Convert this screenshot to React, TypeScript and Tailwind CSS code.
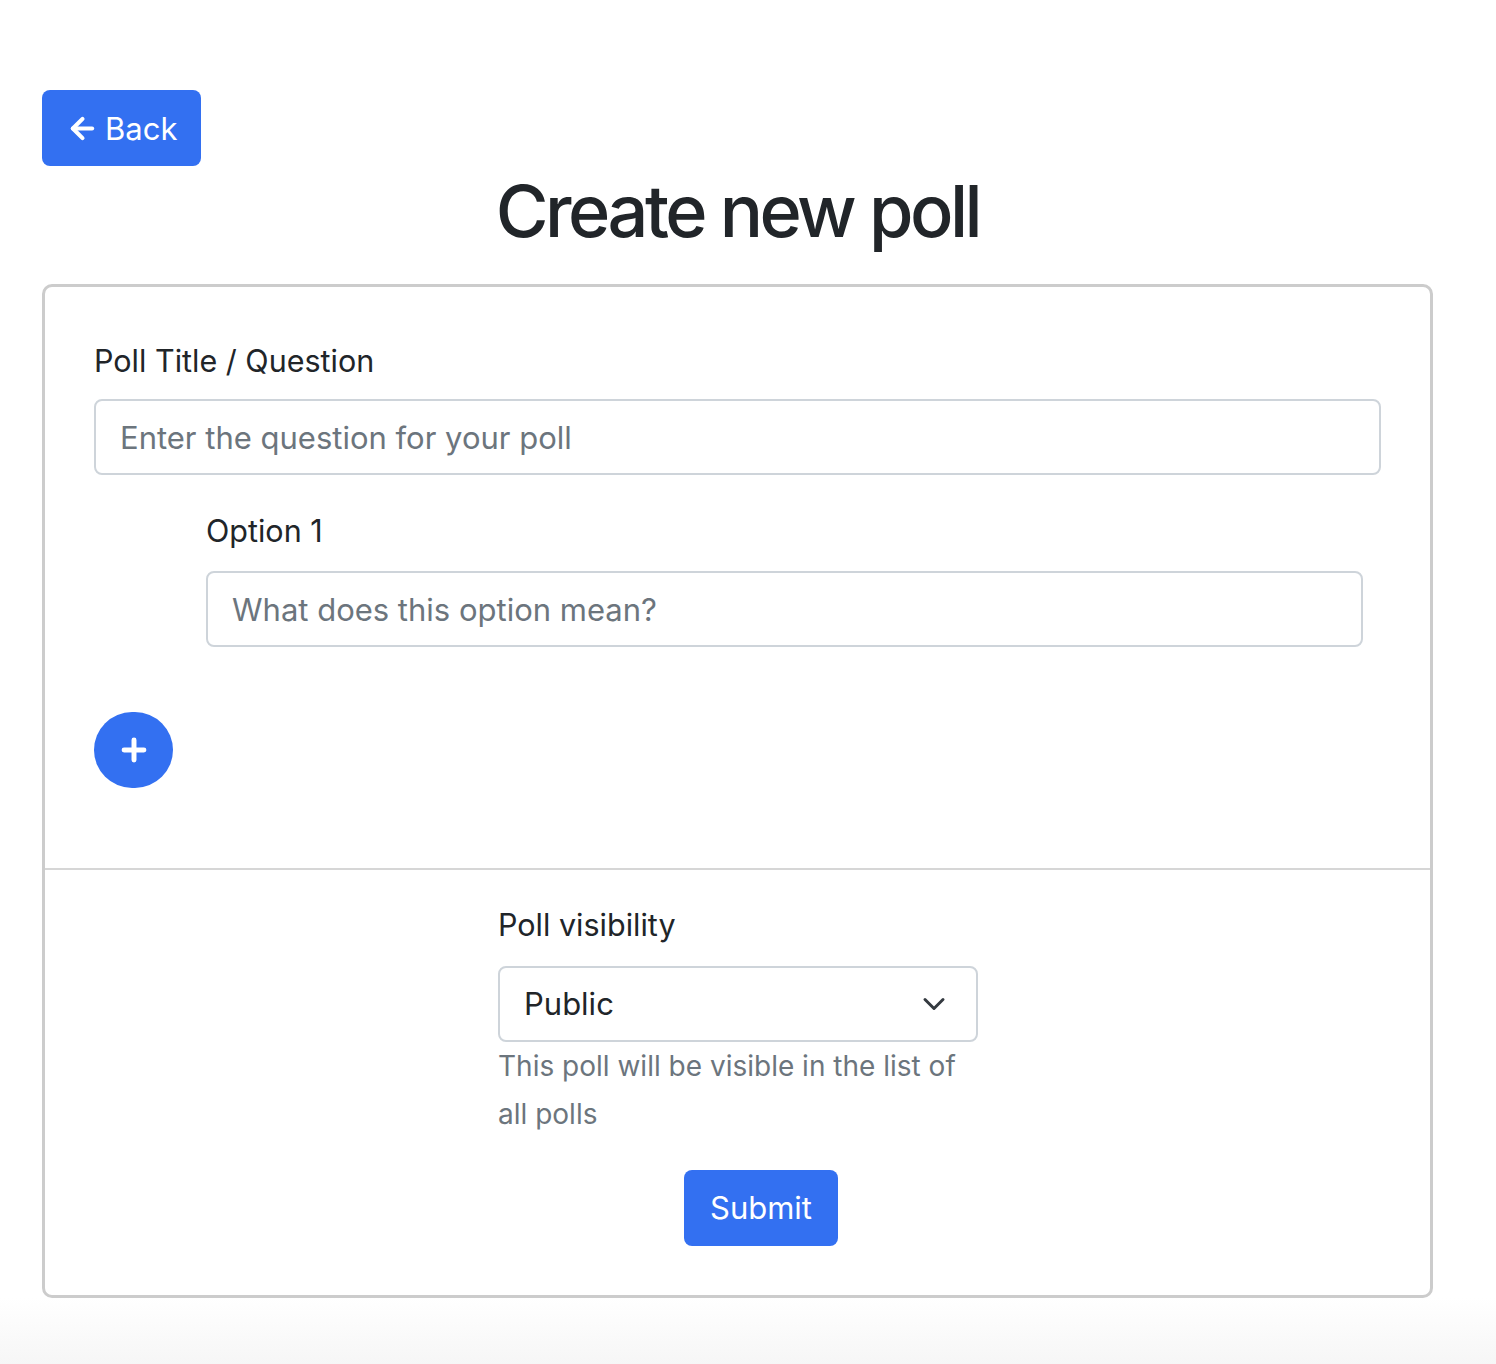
import React from 'react';
import { ArrowLeft, Plus } from 'lucide-react';

const font = { fontFamily: 'Inter, "Noto Sans", sans-serif' };

const App: React.FC = () => {
  return (
    <div className="min-h-screen bg-white text-[#212529]" style={font}>
      <div className="px-[42px] pt-[90px] w-[1475px]">
        <button className="flex items-center gap-[6px] h-[76px] pl-[24px] pr-[24px] rounded-[8px] bg-[#3370f1] text-white text-[31px] leading-none">
          <ArrowLeft className="w-[33px] h-[33px]" strokeWidth={3} />
          <span>Back</span>
        </button>

        <h1 className="text-center text-[72px] leading-[90px] font-medium tracking-[-3.5px] mb-[28px]">Create new poll</h1>

        <div className="border-[3px] border-[#cccccc] rounded-[10px]">
          <div className="px-[49px] pt-[50px] pb-[80px]">
            <label className="block text-[30.5px] leading-[48px] mb-[14px]">Poll Title / Question</label>
            <input
              className="block w-full h-[76px] border-2 border-[#ced4da] rounded-[8px] px-[24px] text-[31px] placeholder:text-[#6c757d] outline-none"
              placeholder="Enter the question for your poll"
              style={font}
            />

            <div className="ml-[112px] mr-[18px] mt-[32px]">
              <label className="block text-[30.5px] leading-[48px] mb-[16px]">Option 1</label>
              <input
                className="block w-full h-[76px] border-2 border-[#ced4da] rounded-[8px] px-[24px] text-[31px] placeholder:text-[#6c757d] outline-none"
                placeholder="What does this option mean?"
                style={font}
              />
            </div>

            <button className="mt-[65px] w-[79px] h-[76px] rounded-full bg-[#3370f1] flex items-center justify-center text-white">
              <Plus className="w-[34px] h-[34px]" strokeWidth={3.5} />
            </button>
          </div>

          <div className="border-t-2 border-[#d6d6d6]" />

          <div className="pt-[31px] pb-[49px] flex justify-center">
            <div className="w-[480px] ml-[1px]">
              <label className="block text-[30.5px] leading-[48px] mb-[17px]">Poll visibility</label>
              <div className="relative h-[76px] border-2 border-[#ced4da] rounded-[8px] flex items-center px-[24px] text-[31px]">
                <span>Public</span>
                <svg className="absolute right-[28px] top-[24px] w-[28px] h-[24px]" viewBox="0 0 16 16" fill="none" stroke="#343a40" strokeWidth="2" strokeLinecap="round" strokeLinejoin="round">
                  <path d="m2 5 6 6 6-6" />
                </svg>
              </div>
              <p className="text-[28px] leading-[48px] text-[#6c757d]">This poll will be visible in the list of all polls</p>
              <button className="mt-[32px] ml-[186px] h-[76px] px-[26px] rounded-[8px] bg-[#3370f1] text-white text-[31px]">Submit</button>
            </div>
          </div>
        </div>
      </div>
      <div className="h-[67px] bg-gradient-to-b from-white to-[#f6f6f6]" />
    </div>
  );
};

export default App;
